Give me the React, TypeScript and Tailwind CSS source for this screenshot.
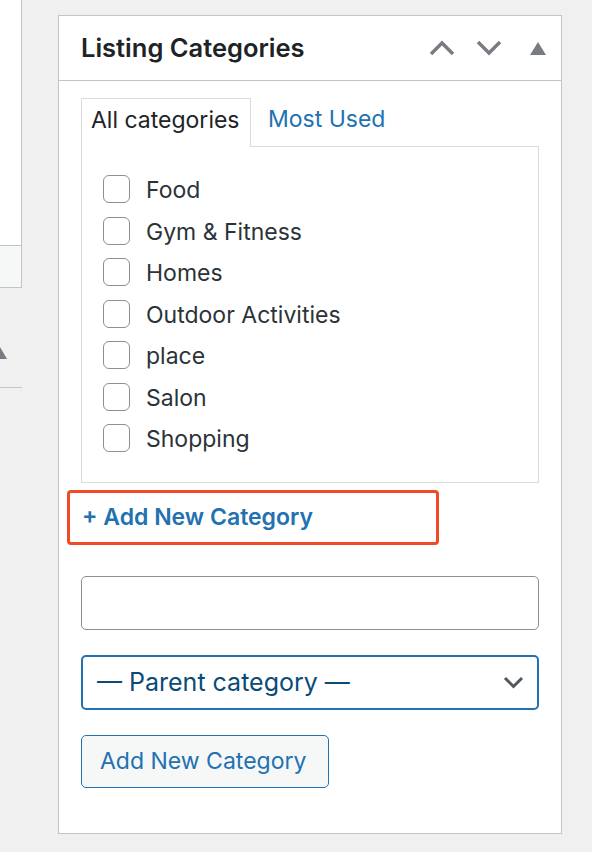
import React from "react";

const categories = [
  "Food",
  "Gym & Fitness",
  "Homes",
  "Outdoor Activities",
  "place",
  "Salon",
  "Shopping",
];

export default function App() {
  return (
    <div
      className="w-[592px] h-[852px] bg-[#f0f0f1] overflow-hidden flex"
      style={{ fontFamily: "Inter, 'Noto Sans', sans-serif" }}
    >
      {/* Left column (cut off) */}
      <div className="w-[22px] shrink-0 flex flex-col">
        <div className="h-[245px] bg-white border-r border-[#c3c4c7]" />
        <div className="h-[43px] bg-[#f6f7f7] border-t border-b border-r border-[#c3c4c7]" />
        <div className="h-[59px]" />
        <div className="h-[12px] w-[7px] overflow-hidden relative">
          <svg width="14" height="12" viewBox="0 0 14 12" className="absolute -left-[7px] top-0">
            <path d="M7 0 L14 12 L0 12 Z" fill="#787c82" />
          </svg>
        </div>
        <div className="h-[28px]" />
        <div className="h-px bg-[#c3c4c7]" />
      </div>

      {/* Main meta box */}
      <div className="ml-[36px] mt-[15px] w-[504px] h-[819px] bg-white border border-[#c3c4c7] flex flex-col">
        {/* Header */}
        <div className="h-[65px] shrink-0 border-b border-[#c3c4c7] flex items-center pl-[22px] pr-[15px]">
          <h2 className="text-[25.5px] font-semibold text-[#1d2327] flex-1">
            Listing Categories
          </h2>
          <div className="flex items-center gap-[21px]">
            <svg width="26" height="16" viewBox="0 0 26 16">
              <path d="M2 14 L13 3 L24 14" fill="none" stroke="#787c82" strokeWidth="3.4" />
            </svg>
            <svg width="26" height="16" viewBox="0 0 26 16">
              <path d="M2 2 L13 13 L24 2" fill="none" stroke="#787c82" strokeWidth="3.4" />
            </svg>
            <svg width="16" height="13" viewBox="0 0 16 13" className="ml-[7px]">
              <path d="M8 0 L16 13 L0 13 Z" fill="#787c82" />
            </svg>
          </div>
        </div>

        {/* Body */}
        <div className="pl-[22px] pr-[22px] pt-[16px] flex flex-col">
          {/* Tabs */}
          <div className="flex items-end">
            <div className="h-[49px] w-[170px] border border-b-0 border-[#dcdcde] bg-white flex items-center pl-[9px] pb-[5px] text-[23px] text-[#1d2327] relative z-10 -mb-px">
              All categories
            </div>
            <div className="h-[49px] flex items-center pl-[17px] pb-[5px] text-[23px] text-[#2271b1]">
              Most Used
            </div>
          </div>

          {/* Category list */}
          <div className="h-[337px] border border-[#dcdcde] pt-[28px] pl-[21px]">
            <ul className="flex flex-col">
              {categories.map((c) => (
                <li key={c} className="h-[41.5px] flex items-start">
                  <span className="w-[27px] h-[28px] rounded-[6px] border border-[#8c8f94] bg-white shrink-0" />
                  <span className="ml-[16px] text-[23px] leading-[30px] text-[#2c3338]">{c}</span>
                </li>
              ))}
            </ul>
          </div>

          {/* Add new category toggle (highlighted) */}
          <div className="mt-[7px] -ml-[14px] w-[372px] h-[55px] border-[3px] border-[#ef4b27] rounded-[4px] flex items-center pl-[12px]">
            <span className="text-[23px] font-semibold text-[#2271b1]">+ Add New Category</span>
          </div>

          {/* New category name */}
          <div className="mt-[31px] h-[54px] w-[458px] rounded-[5px] border border-[#8c8f94] bg-white" />

          {/* Parent select */}
          <div className="mt-[25px] h-[55px] w-[458px] rounded-[5px] border-2 border-[#2271b1] flex items-center pl-[14px] pr-[13px]">
            <span className="flex-1 text-[25px] text-[#0a4b78]">— Parent category —</span>
            <svg width="21" height="13" viewBox="0 0 21 13">
              <path d="M2 2 L10.5 10.5 L19 2" fill="none" stroke="#50575e" strokeWidth="3" />
            </svg>
          </div>

          {/* Submit */}
          <div className="mt-[25px]">
            <button className="h-[53px] w-[248px] rounded-[5px] border border-[#2271b1] bg-[#f6f7f7] text-[23px] text-[#2271b1] text-left pl-[18px]">
              Add New Category
            </button>
          </div>
        </div>
      </div>
    </div>
  );
}
